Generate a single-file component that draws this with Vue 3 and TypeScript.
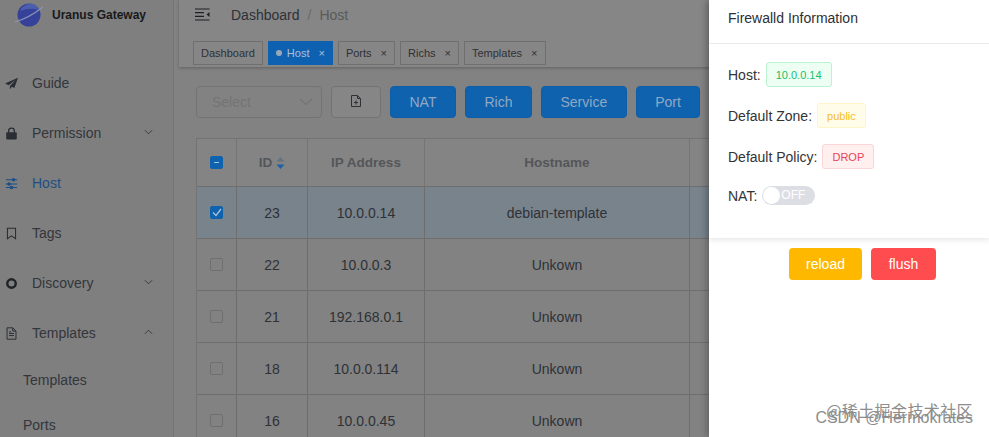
<script setup lang="ts">
interface Row { id: number; ip: string; host: string; selected?: boolean }
const rows: Row[] = [
  { id: 23, ip: '10.0.0.14', host: 'debian-template', selected: true },
  { id: 22, ip: '10.0.0.3', host: 'Unkown' },
  { id: 21, ip: '192.168.0.1', host: 'Unkown' },
  { id: 18, ip: '10.0.0.114', host: 'Unkown' },
  { id: 16, ip: '10.0.0.45', host: 'Unkown' },
]
const tabs = ['Dashboard', 'Host', 'Ports', 'Richs', 'Templates']
const actions = ['NAT', 'Rich', 'Service', 'Port']
</script>

<template>
  <div class="screen">
    <aside class="sidebar">
      <div class="brand">
        <svg class="logo" width="30" height="26" viewBox="0 0 30 26">
          <circle cx="15" cy="13" r="11.5" fill="#36419a" />
          <path d="M6 9a12 10 0 0 1 14-7a10 10 0 0 1 5 6a30 30 0 0 0-19 1z" fill="#4c5fae" />
          <path d="M1 20C8 18 20 12 29 5" fill="none" stroke="#8a93b5" stroke-width="1.2" />
        </svg>
        <b>Uranus Gateway</b>
      </div>
      <nav class="menu">
        <div class="item">
          <svg class="mi" viewBox="0 0 16 16"><path d="M16 1 0 8l4.500 2.200L13 3.500 6 11.500V15l2.500-3 3 1.500z" fill="#2a2d33" /></svg>
          <span>Guide</span>
        </div>
        <div class="item">
          <svg class="mi" viewBox="0 0 16 16"><path d="M4.500 7V5a3.500 3.500 0 0 1 7 0v2" fill="none" stroke="#2a2d33" stroke-width="1.600" /><rect x="1.500" y="6.500" width="13" height="9" rx="1.200" fill="#2a2d33" /></svg>
          <span>Permission</span>
          <svg class="chev" viewBox="0 0 10 6"><path d="M1 1l4 4 4-4" /></svg>
        </div>
        <div class="item active">
          <svg class="mi" viewBox="0 0 16 16" fill="none" stroke="#1d4f86" stroke-width="1.300"><path d="M1 3.500h14M1 8.500h14M1 13h14" /><circle cx="10.500" cy="3.500" r="1.500" fill="#1d4f86" /><circle cx="5" cy="8.500" r="1.500" fill="#1d4f86" /><circle cx="8" cy="13" r="1.500" fill="#1d4f86" /></svg>
          <span>Host</span>
        </div>
        <div class="item">
          <svg class="mi" viewBox="0 0 16 16"><path d="M3 1.500h10v13l-5-3.500-5 3.500z" fill="none" stroke="#2a2d33" stroke-width="1.300" /></svg>
          <span>Tags</span>
        </div>
        <div class="item">
          <svg class="mi" viewBox="0 0 16 16"><circle cx="8" cy="8" r="5.200" fill="none" stroke="#1f2227" stroke-width="3" /></svg>
          <span>Discovery</span>
          <svg class="chev" viewBox="0 0 10 6"><path d="M1 1l4 4 4-4" /></svg>
        </div>
        <div class="item">
          <svg class="mi" viewBox="0 0 16 16" fill="none" stroke="#2a2d33" stroke-width="1.200"><path d="M2.500 1h7l4 4v10h-11zM9.500 1v4h4M5 8h6M5 10.500h6M5 6h2.500" /></svg>
          <span>Templates</span>
          <svg class="chev" viewBox="0 0 10 6"><path d="M1 5l4-4 4 4" /></svg>
        </div>
      </nav>
      <div class="sub first">Templates</div>
      <div class="sub">Ports</div>
    </aside>

    <main class="main">
      <section class="topcard">
        <div class="crumbs">
          <svg class="burger" width="15" height="13" viewBox="0 0 15 13" fill="none" stroke="#1c1f24" stroke-width="1.200">
            <path d="M0 1h14.500M0 4.700h9M0 8.300h9M0 12h14.500" />
            <path d="M14.500 4v5l-3-2.500z" fill="#1c1f24" stroke="none" />
          </svg>
          <span class="c1">Dashboard</span>
          <span class="sl">/</span>
          <span class="c2">Host</span>
        </div>
        <div class="tabs">
          <div v-for="t in tabs" :key="t" class="tab" :class="{ on: t === 'Host', plain: t === 'Dashboard' }">
            <i v-if="t === 'Host'" class="dot"></i>
            <span>{{ t }}</span>
            <em v-if="t !== 'Dashboard'">×</em>
          </div>
        </div>
      </section>

      <section class="toolbar">
        <div class="select">
          <span>Select</span>
          <svg width="14" height="8" viewBox="0 0 14 8" fill="none" stroke="#6d6d6d"><path d="M1 1l6 5.500L13 1" /></svg>
        </div>
        <button class="ghost icon">
          <svg width="10" height="12" viewBox="0 0 10 12" fill="none" stroke="#2e3136"><path d="M.5.500h6l3 3v8h-9zM6.500.500v3h3M5 5.500v4M3 7.500h4" /></svg>
        </button>
        <button v-for="a in actions" :key="a" class="primary">{{ a }}</button>
        <button class="ghost tail"></button>
      </section>

      <section class="table">
        <div class="tr head">
          <div class="td"><i class="check half"></i></div>
          <div class="td id">ID
            <svg width="9" height="12" viewBox="0 0 9 12"><path d="M4.500 0 8.500 4.500H.5z" fill="#66737f" /><path d="M4.500 12 8.500 7.500H.5z" fill="#1a5fa8" /></svg>
          </div>
          <div class="td">IP Address</div>
          <div class="td">Hostname</div>
          <div class="td"></div>
        </div>
        <div v-for="r in rows" :key="r.id" class="tr" :class="{ sel: r.selected }">
          <div class="td">
            <i v-if="r.selected" class="check full">
              <svg width="10" height="9" viewBox="0 0 10 9" fill="none" stroke="#a9c0d8" stroke-width="1.300"><path d="M1 4.500l3 3L9 1" /></svg>
            </i>
            <i v-else class="check"></i>
          </div>
          <div class="td">{{ r.id }}</div>
          <div class="td">{{ r.ip }}</div>
          <div class="td">{{ r.host }}</div>
          <div class="td"></div>
        </div>
      </section>
    </main>

    <aside class="drawer">
      <div class="panel">
        <header>Firewalld Information</header>
        <div class="info">
          <div class="line l1"><label>Host:</label><span class="tag green">10.0.0.14</span></div>
          <div class="line l2"><label>Default Zone:</label><span class="tag yellow">public</span></div>
          <div class="line l3"><label>Default Policy:</label><span class="tag red">DROP</span></div>
          <div class="line l4"><label>NAT:</label>
            <span class="switch"><i></i><span>OFF</span></span>
          </div>
        </div>
      </div>
      <div class="ops">
        <button class="reload">reload</button>
        <button class="flush">flush</button>
      </div>
      <div class="mark">
        <span class="m1">@稀土掘金技术社区</span>
        <span class="m2">CSDN @Hermokrates</span>
      </div>
    </aside>
  </div>
</template>

<style>
html, body { margin: 0; }
</style>

<style scoped>
.screen {
  position: relative;
  width: 989px;
  height: 437px;
  overflow: hidden;
  display: flex;
  background: #828282;
  font-family: "Liberation Sans", Arial, sans-serif;
  font-size: 14px;
  color: #2e3136;
}
.sidebar {
  width: 173px;
  flex: none;
  border-right: 1px solid #747474;
  background: #7f7f7f;
}
.brand {
  height: 30px;
  display: flex;
  align-items: center;
  padding-left: 14px;
  font-size: 12px;
}
.brand b { margin-left: 8px; color: #17191c; }
.menu { margin-top: 28px; }
.item {
  height: 50px;
  display: flex;
  align-items: center;
  padding-left: 5px;
  position: relative;
}
.item span { color: #33363b; margin-left: 14px; }
.item.active span { color: #1d4f86; }
.mi { width: 13px; height: 13px; flex: none; }
.chev {
  position: absolute;
  left: 144px;
  top: 21px;
  width: 9px;
  height: 6px;
  fill: none;
  stroke: #33363b;
}
.sub { padding-left: 23px; color: #33363b; height: 45px; line-height: 45px; }
.sub.first { margin-top: 0; }

.main { flex: 1; min-width: 0; padding-left: 5px; }
.topcard {
  height: 67px;
  background: #868686;
  box-shadow: 0 1px 3px rgba(0, 0, 0, .25);
  box-sizing: border-box;
}
.crumbs {
  height: 41px;
  display: flex;
  align-items: center;
  padding: 0 0 12px 16px;
  box-sizing: border-box;
  color: #2e3136;
}
.burger { margin-right: 21px; }
.sl { margin: 0 8px; color: #6a6a6a; }
.c2 { color: #5a5a5a; }
.tabs { display: flex; gap: 5px; padding-left: 14px; }
.tab {
  height: 24px;
  box-sizing: border-box;
  border: 1px solid #6f6f6f;
  background: #868686;
  padding: 0 7px;
  display: flex;
  align-items: center;
  font-size: 11px;
  color: #2e3136;
}
.tab em { font-style: normal; margin-left: 9px; font-size: 11px; }
.tab.on { background: #0e60b0; border-color: #0e60b0; color: #aac0d6; }
.dot { width: 6px; height: 6px; border-radius: 50%; background: #9aa9b8; margin-right: 5px; }

.toolbar {
  height: 32px;
  margin-top: 19px;
  padding-left: 17px;
  display: flex;
  gap: 9px;
}
.select {
  width: 126px;
  box-sizing: border-box;
  border: 1px solid #737373;
  border-radius: 4px;
  display: flex;
  align-items: center;
  justify-content: space-between;
  padding: 0 8px 0 15px;
  color: #747474;
}
button {
  font: inherit;
  height: 32px;
  border-radius: 4px;
  box-sizing: border-box;
  padding: 0;
  flex: none;
}
.ghost { background: #868686; border: 1px solid #737373; }
.icon { width: 50px; }
.tail { width: 60px; }
.primary {
  background: #0f62ae;
  border: 1px solid #0e5da6;
  color: #91a9c4;
  padding: 0 18.500px;
}

.table {
  margin: 20px 0 0 17px;
  width: 620px;
  border-top: 1px solid #737373;
  border-left: 1px solid #737373;
  box-sizing: border-box;
}
.tr {
  display: grid;
  grid-template-columns: 40px 71px 117px 265px 1fr;
  height: 52px;
  box-sizing: border-box;
  border-bottom: 1px solid #6e6e6e;
  background: #828282;
}
.head { height: 48px; background: #848484; color: #54565a; font-weight: bold; font-size: 13.500px; }
.sel { background: #79838c; }
.td {
  display: flex;
  align-items: center;
  justify-content: center;
  gap: 4px;
  border-right: 1px solid #6e6e6e;
}
.head .td { border-right-color: #767676; }
.check {
  width: 13px;
  height: 13px;
  box-sizing: border-box;
  border: 1px solid #6f6f6f;
  border-radius: 2px;
  display: flex;
  align-items: center;
  justify-content: center;
}
.check.full, .check.half { background: #0f62ae; border-color: #0f62ae; }
.check.half::after { content: ""; width: 5px; height: 1px; background: #a9c0d8; }

.drawer {
  position: absolute;
  left: 709px;
  top: 0;
  width: 280px;
  height: 437px;
  background: #fff;
  box-shadow: -3px 0 6px rgba(0, 0, 0, .22);
}
.panel {
  height: 238px;
  box-sizing: border-box;
  box-shadow: 0 2px 6px rgba(0, 0, 0, .1);
}
.panel header {
  height: 44px;
  box-sizing: border-box;
  border-bottom: 1px solid #e8eaec;
  padding: 9px 0 0 19px;
  line-height: 18px;
  color: #2c2f33;
}
.info { padding-left: 19px; }
.line { display: flex; align-items: center; color: #333; }
.l1 { margin-top: 18px; height: 25px; }
.l2 { margin-top: 16px; height: 25px; }
.l3 { margin-top: 16px; height: 25px; }
.l4 { margin-top: 17px; height: 19px; }
.line label { margin-right: 5px; }
.tag {
  height: 25px;
  box-sizing: border-box;
  border: 1px solid;
  border-radius: 3px;
  padding: 0 9px;
  display: flex;
  align-items: center;
  font-size: 11px;
}
.green { background: #edfff3; border-color: #bbf2d0; color: #19be6b; }
.yellow { background: #fffcea; border-color: #fff3c8; color: #f5bd1f; }
.red { background: #ffefef; border-color: #fcd6d6; color: #e8425a; }
.switch {
  position: relative;
  width: 53px;
  height: 19px;
  border-radius: 10px;
  background: #dcdee4;
  display: block;
  color: #fff;
  font-size: 12px;
}
.switch i {
  position: absolute;
  left: 1px;
  top: 1px;
  width: 17px;
  height: 17px;
  border-radius: 50%;
  background: #fff;
}
.switch span { position: absolute; left: 19px; top: 2px; }
.ops {
  display: flex;
  gap: 9px;
  padding: 10px 0 0 80px;
}
.ops button { color: #fff; border: none; }
.reload { width: 73px; background: #ffb800; }
.flush { width: 65px; background: #ff4d4f; }
.mark {
  position: absolute;
  left: 104px;
  top: 400px;
  width: 160px;
  height: 30px;
  color: #8d8d8d;
  font-size: 16px;
  white-space: nowrap;
}
.mark span { position: absolute; right: 0; }
.m1 { top: 0; font-family: "Noto Sans CJK SC", sans-serif; letter-spacing: .4px; line-height: 20px; }
.m2 { top: 9px; line-height: 18px; }
</style>
